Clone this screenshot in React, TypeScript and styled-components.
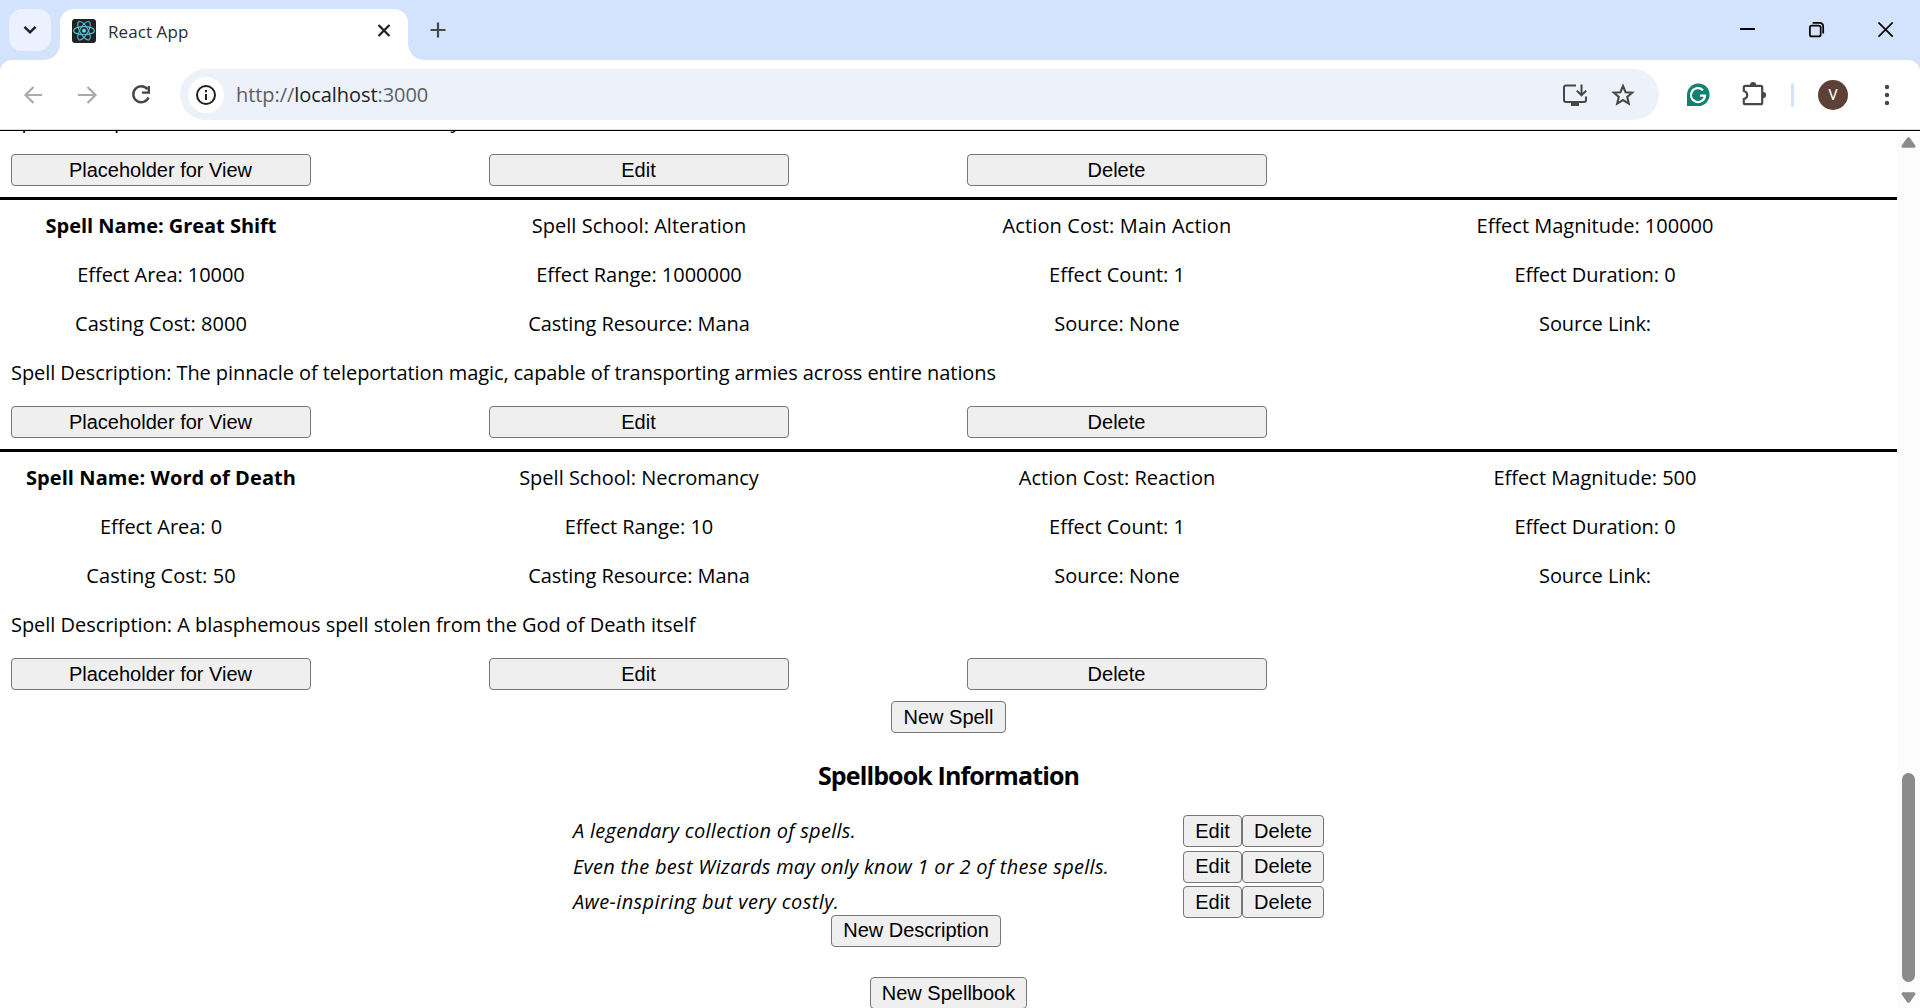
import React from "react";
import styled, { createGlobalStyle } from "styled-components";

const UI = `"Open Sans", "Noto Sans", sans-serif`;
const ARIAL = `"Liberation Sans", Arial, sans-serif`;

const GlobalStyle = createGlobalStyle`
  * { box-sizing: border-box; }
  html, body, #root { height: 100%; }
  body { margin: 0; background: #fff; color: #000; overflow: hidden; font: 20px ${UI}; }
`;

const Window = styled.div`
  height: 1008px;
  display: flex;
  flex-direction: column;
  overflow: hidden;
`;

/* ---------- browser chrome ---------- */
const TabStrip = styled.header`
  height: 60px;
  flex: none;
  display: flex;
  padding-left: 9px;
  background: #d3e3fd;
`;
const TabSearch = styled.div`
  width: 42px;
  height: 42px;
  margin-top: 9px;
  border-radius: 13px;
  background: #ebf1fe;
  display: grid;
  place-items: center;
`;
const Tab = styled.div`
  position: relative;
  width: 348px;
  height: 51px;
  margin: 9px 0 0 9px;
  padding: 0 16px 8px 12px;
  border-radius: 14px 14px 0 0;
  background: #fff;
  display: flex;
  align-items: center;
  &::before, &::after {
    content: "";
    position: absolute;
    bottom: 0;
    width: 16px;
    height: 16px;
  }
  &::before { left: -16px; background: radial-gradient(circle at 0 0, transparent 15.5px, #fff 16px); }
  &::after { right: -16px; background: radial-gradient(circle at 100% 0, transparent 15.5px, #fff 16px); }
`;
const TabTitle = styled.span`
  flex: 1;
  margin: 1px 0 0 12px;
  font-size: 17px;
  letter-spacing: 0.08px;
  color: #2b2d30;
`;
const NewTab = styled.div`
  width: 60px;
  height: 60px;
  display: grid;
  place-items: center;
`;
const WindowControls = styled.div`
  margin-left: auto;
  display: flex;
  align-items: center;
  gap: 53px;
  padding-right: 26px;
`;
const ToolbarWrap = styled.div`
  height: 71px;
  flex: none;
  background: #d3e3fd;
`;
const Toolbar = styled.div`
  height: 71px;
  padding: 0 24px 2px 19px;
  border-radius: 12px 12px 0 0;
  background: linear-gradient(#fff 69px, #d9d9d9 69px, #d9d9d9 70px, #000 70px);
  display: flex;
  align-items: center;
`;
const NavButtons = styled.div`
  display: flex;
  gap: 26px;
  width: 161px;
`;
const AddressBar = styled.div`
  width: 1479px;
  height: 51px;
  padding: 0 23px 0 8px;
  border-radius: 26px;
  background: #ecf1fa;
  display: flex;
  align-items: center;
`;
const SiteInfo = styled.div`
  width: 36px;
  height: 36px;
  border-radius: 50%;
  background: #fff;
  display: grid;
  place-items: center;
`;
const Url = styled.div`
  flex: 1;
  margin-left: 12px;
  font-size: 20px;
  letter-spacing: -0.06px;
  color: #5c5f63;
  b { font-weight: 400; color: #202124; }
`;
const AddressActions = styled.div`
  display: flex;
  gap: 22px;
`;
const ToolbarActions = styled.div`
  flex: 1;
  display: flex;
  align-items: center;
  margin-left: 26px;
`;
const ExtensionIcon = styled.svg`
  flex: none;
  margin: 0 23px 0 29px;
`;
const Divider = styled.i`
  width: 3px;
  height: 24px;
  margin-right: 24px;
  border-radius: 2px;
  background: #d3e3fd;
`;
const Avatar = styled.div`
  width: 30px;
  height: 30px;
  margin-right: 36px;
  border-radius: 50%;
  background: #5d4037;
  color: #fff;
  font: 15px/30px Roboto, sans-serif;
  text-align: center;
`;

/* ---------- page ---------- */
const Viewport = styled.div`
  flex: 1;
  min-height: 0;
  display: flex;
`;
const Page = styled.main`
  width: 1897px;
  height: 877px;
  overflow: hidden;
  display: flex;
  flex-direction: column;
  justify-content: flex-end;
`;
const Spell = styled.section`
  flex: none;
  height: 252px;
  padding: 1px 0 0 11px;
  border-top: 3px solid #000;
`;
const FieldRow = styled.div`
  height: 49px;
  display: grid;
  grid-template-columns: repeat(4, 300px);
  column-gap: 178px;
  align-items: center;
  text-align: center;
`;
const ButtonRow = styled(FieldRow)`
  height: 50px;
`;
const Field = styled.span<{ $ls: number; $bold: boolean }>`
  white-space: nowrap;
  font-weight: ${(p) => (p.$bold ? 700 : 400)};
  letter-spacing: ${(p) => p.$ls}px;
`;
const Description = styled.p<{ $ls: number }>`
  margin: 0;
  height: 49px;
  line-height: 49px;
  white-space: nowrap;
  letter-spacing: ${(p) => p.$ls}px;
`;
const Button = styled.button<{ $w?: number; $lift?: boolean }>`
  flex: none;
  width: ${(p) => p.$w ?? 300}px;
  height: 32px;
  padding: 0 ${(p) => (p.$w ? 0 : 1)}px ${(p) => (p.$lift ? 2 : 0)}px 0;
  border: 1px solid #767676;
  border-radius: 4px;
  background: #efefef;
  color: #000;
  font: 20px ${ARIAL};
  white-space: nowrap;
`;
const Footer = styled.div`
  flex: none;
  height: 307px;
  display: flex;
  flex-direction: column;
  align-items: center;
`;
const Heading = styled.h3`
  margin: 23px 0 21px;
  font-size: 25px;
  line-height: 38px;
  letter-spacing: -0.88px;
`;
const Notes = styled.ul`
  width: 751px;
  margin: 0;
  padding: 0;
  list-style: none;
  display: flex;
  flex-direction: column;
`;
const Note = styled.li<{ $h: number }>`
  height: ${(p) => p.$h}px;
  display: flex;
  align-items: flex-start;
`;
const NoteText = styled.em<{ $ls: number }>`
  flex: 1;
  line-height: 32px;
  letter-spacing: ${(p) => p.$ls}px;
`;
const NewNote = styled(Button)`
  margin: 0 65px 30px 0;
`;
const ScrollBar = styled.div`
  width: 23px;
  height: 877px;
  padding: 6px 0 5px;
  background: #fcfcfc;
  display: flex;
  flex-direction: column;
  align-items: center;
`;
const Thumb = styled.div`
  width: 13px;
  height: 209px;
  margin: auto 0 10px;
  border-radius: 7px;
  background: #8b8b8b;
`;

const ReactLogo = () => (
  <svg width="24" height="24" viewBox="0 0 24 24">
    <rect width="24" height="24" rx="3" fill="#222" />
    <g fill="none" stroke="#58c4dc" strokeWidth="1.1">
      <ellipse cx="12" cy="11.7" rx="10.4" ry="4.1" />
      <ellipse cx="12" cy="11.7" rx="10.4" ry="4.1" transform="rotate(60 12 11.7)" />
      <ellipse cx="12" cy="11.7" rx="10.4" ry="4.1" transform="rotate(120 12 11.7)" />
    </g>
    <circle cx="12" cy="11.7" r="2" fill="#61dafb" />
  </svg>
);

const Arrow = ({ flip }: { flip?: boolean }) => (
  <svg width="28" height="28" viewBox="0 0 28 28" fill="none" stroke="#a9abad" strokeWidth="2.2">
    <path d={flip ? "M5 14H22M14.5 6L22.5 14L14.5 22" : "M23 14H6M14.5 6L6.5 14L14.5 22"} />
  </svg>
);

type SpellData = {
  /* rows of [text, letter spacing] */
  fields: [string, number][][];
  description: string;
  ls: number;
};

const SPELLS: SpellData[] = [
  { fields: [[], [], []], description: "A bolt that decimates the enemy", ls: -0.4 },
  {
    fields: [
      [["Spell Name: Great Shift", -0.03], ["Spell School: Alteration", 0.02], ["Action Cost: Main Action", 0.12], ["Effect Magnitude: 100000", 0]],
      [["Effect Area: 10000", -0.06], ["Effect Range: 1000000", -0.02], ["Effect Count: 1", 0], ["Effect Duration: 0", -0.06]],
      [["Casting Cost: 8000", 0.04], ["Casting Resource: Mana", -0.07], ["Source: None", 0], ["Source Link:", -0.08]],
    ],
    description: "The pinnacle of teleportation magic, capable of transporting armies across entire nations",
    ls: -0.08,
  },
  {
    fields: [
      [["Spell Name: Word of Death", 0.08], ["Spell School: Necromancy", 0], ["Action Cost: Reaction", 0], ["Effect Magnitude: 500", 0.02]],
      [["Effect Area: 0", -0.05], ["Effect Range: 10", -0.02], ["Effect Count: 1", 0], ["Effect Duration: 0", -0.06]],
      [["Casting Cost: 50", 0.06], ["Casting Resource: Mana", -0.07], ["Source: None", 0], ["Source Link:", -0.08]],
    ],
    description: "A blasphemous spell stolen from the God of Death itself",
    ls: -0.04,
  },
];

const NOTES = [
  { text: "A legendary collection of spells.", h: 36, ls: 0.27, lift: false },
  { text: "Even the best Wizards may only know 1 or 2 of these spells.", h: 35, ls: 0.28, lift: true },
  { text: "Awe-inspiring but very costly.", h: 29, ls: 0.38, lift: false },
];

export default function App() {
  return (
    <Window>
      <GlobalStyle />
      <TabStrip>
        <TabSearch>
          <svg width="14" height="10" viewBox="0 0 14 10" fill="none" stroke="#1f1f1f" strokeWidth="2.4">
            <path d="M1.5 1.8L7 7.3L12.5 1.8" />
          </svg>
        </TabSearch>
        <Tab>
          <ReactLogo />
          <TabTitle>React App</TabTitle>
          <svg width="16" height="16" viewBox="0 0 16 16" stroke="#1f1f1f" strokeWidth="2.2">
            <path d="M2.5 2L13.5 13M13.5 2L2.5 13" />
          </svg>
        </Tab>
        <NewTab>
          <svg width="16" height="16" viewBox="0 0 16 16" stroke="#474747" strokeWidth="2.2">
            <path d="M8 0.5V15.5M0.5 8H15.5" />
          </svg>
        </NewTab>
        <WindowControls>
          <svg width="16" height="16" viewBox="0 0 16 16" stroke="#000" strokeWidth="2">
            <path d="M0 7H15" />
          </svg>
          <svg width="16" height="16" viewBox="0 0 16 16" fill="none" stroke="#000" strokeWidth="1.7">
            <rect x="0.9" y="3.6" width="10.8" height="10.8" rx="2" />
            <path d="M3.6 0.9H10.4Q14.2 0.9 14.2 4.7V11.6" />
          </svg>
          <svg width="16" height="16" viewBox="0 0 16 16" stroke="#000" strokeWidth="1.7">
            <path d="M0.5 0.5L14.7 14.7M14.7 0.5L0.5 14.7" />
          </svg>
        </WindowControls>
      </TabStrip>
      <ToolbarWrap>
        <Toolbar>
          <NavButtons>
            <Arrow />
            <Arrow flip />
            <svg width="28" height="28" viewBox="0 0 28 28" fill="none" stroke="#474747" strokeWidth="2.4">
              <path d="M20.5 8.2A8 8 0 1 0 21.6 16.5" />
              <path d="M21.8 5V11.6H15" />
            </svg>
          </NavButtons>
          <AddressBar>
            <SiteInfo>
              <svg width="22" height="22" viewBox="0 0 22 22" fill="none" stroke="#1f1f1f" strokeWidth="2">
                <circle cx="11" cy="11" r="9" />
                <path d="M11 10V16M11 6V8.2" />
              </svg>
            </SiteInfo>
            <Url>
              http://<b>localhost</b>:3000
            </Url>
            <AddressActions>
              <svg width="26" height="26" viewBox="0 0 26 26" fill="none" stroke="#474747" strokeWidth="2">
                <path d="M14 3.5H4Q2 3.5 2 5.5V18Q2 20 4 20H22Q24 20 24 18V14.5" />
                <path d="M19.5 2.5V13M14.8 8.6L19.5 13.3L24.2 8.6" />
                <path d="M9 22H17" strokeWidth="4" />
              </svg>
              <svg width="26" height="26" viewBox="0 0 26 26" fill="none" stroke="#474747" strokeWidth="2.1">
                <path d="M13 4L15.6 10.2L22.2 10.7L17.2 15L18.8 21.6L13 18.1L7.2 21.6L8.8 15L3.8 10.7L10.4 10.2Z" />
              </svg>
            </AddressActions>
          </AddressBar>
          <ToolbarActions>
            <svg width="26" height="26" viewBox="0 0 26 26">
              <path d="M2 24V13A11.3 11.3 0 1 1 13.3 24Z" fill="#0f8370" />
              <path d="M18 8.2A7 7 0 1 0 20 13.6H15" fill="none" stroke="#fff" strokeWidth="2.2" />
            </svg>
            <ExtensionIcon width="28" height="28" viewBox="0 0 28 28">
              <path
                d="M3.8 10V6.3Q3.8 4.8 5.3 4.8H20.7Q22.2 4.8 22.2 6.3V21.7Q22.2 23.2 20.7 23.2H5.3Q3.8 23.2 3.8 21.7V18Q7.2 17.3 7.2 14T3.8 10Z"
                fill="none"
                stroke="#474747"
                strokeWidth="2.2"
                strokeLinejoin="round"
              />
              <path d="M10 4.2A3.1 3.1 0 0 1 16.2 4.2ZM23 11A3.1 3.1 0 0 1 23 17.2Z" fill="#474747" />
            </ExtensionIcon>
            <Divider />
            <Avatar>V</Avatar>
            <svg width="6" height="24" viewBox="0 0 6 24" fill="#474747">
              <circle cx="3" cy="4" r="2.2" />
              <circle cx="3" cy="12" r="2.2" />
              <circle cx="3" cy="20" r="2.2" />
            </svg>
          </ToolbarActions>
        </Toolbar>
      </ToolbarWrap>
      <Viewport>
        <Page>
          {SPELLS.map((spell) => (
            <Spell key={spell.description}>
              {spell.fields.map((row, r) => (
                <FieldRow key={r}>
                  {row.map(([text, ls], c) => (
                    <Field key={c} $ls={ls} $bold={r === 0 && c === 0}>
                      {text}
                    </Field>
                  ))}
                </FieldRow>
              ))}
              <Description $ls={spell.ls}>Spell Description: {spell.description}</Description>
              <ButtonRow>
                <Button>Placeholder for View</Button>
                <Button>Edit</Button>
                <Button>Delete</Button>
              </ButtonRow>
            </Spell>
          ))}
          <Footer>
            <Button $w={115}>New Spell</Button>
            <Heading>Spellbook Information</Heading>
            <Notes>
              {NOTES.map((n) => (
                <Note key={n.text} $h={n.h}>
                  <NoteText $ls={n.ls}>{n.text}</NoteText>
                  <Button $w={59} $lift={n.lift}>Edit</Button>
                  <Button $w={82} $lift={n.lift}>Delete</Button>
                </Note>
              ))}
            </Notes>
            <NewNote $w={170} $lift>New Description</NewNote>
            <Button $w={157}>New Spellbook</Button>
          </Footer>
        </Page>
        <ScrollBar>
          <svg width="15" height="11" viewBox="0 0 15 11" fill="#8b8b8b">
            <path d="M6.2 0.8Q7.5 -0.5 8.8 0.8L14.3 8.5Q15 10.6 13 10.8H2Q0 10.6 0.7 8.5Z" />
          </svg>
          <Thumb />
          <svg width="15" height="11" viewBox="0 0 15 11" fill="#8b8b8b">
            <path d="M6.2 10.2Q7.5 11.5 8.8 10.2L14.3 2.5Q15 0.4 13 0.2H2Q0 0.4 0.7 2.5Z" />
          </svg>
        </ScrollBar>
      </Viewport>
    </Window>
  );
}
